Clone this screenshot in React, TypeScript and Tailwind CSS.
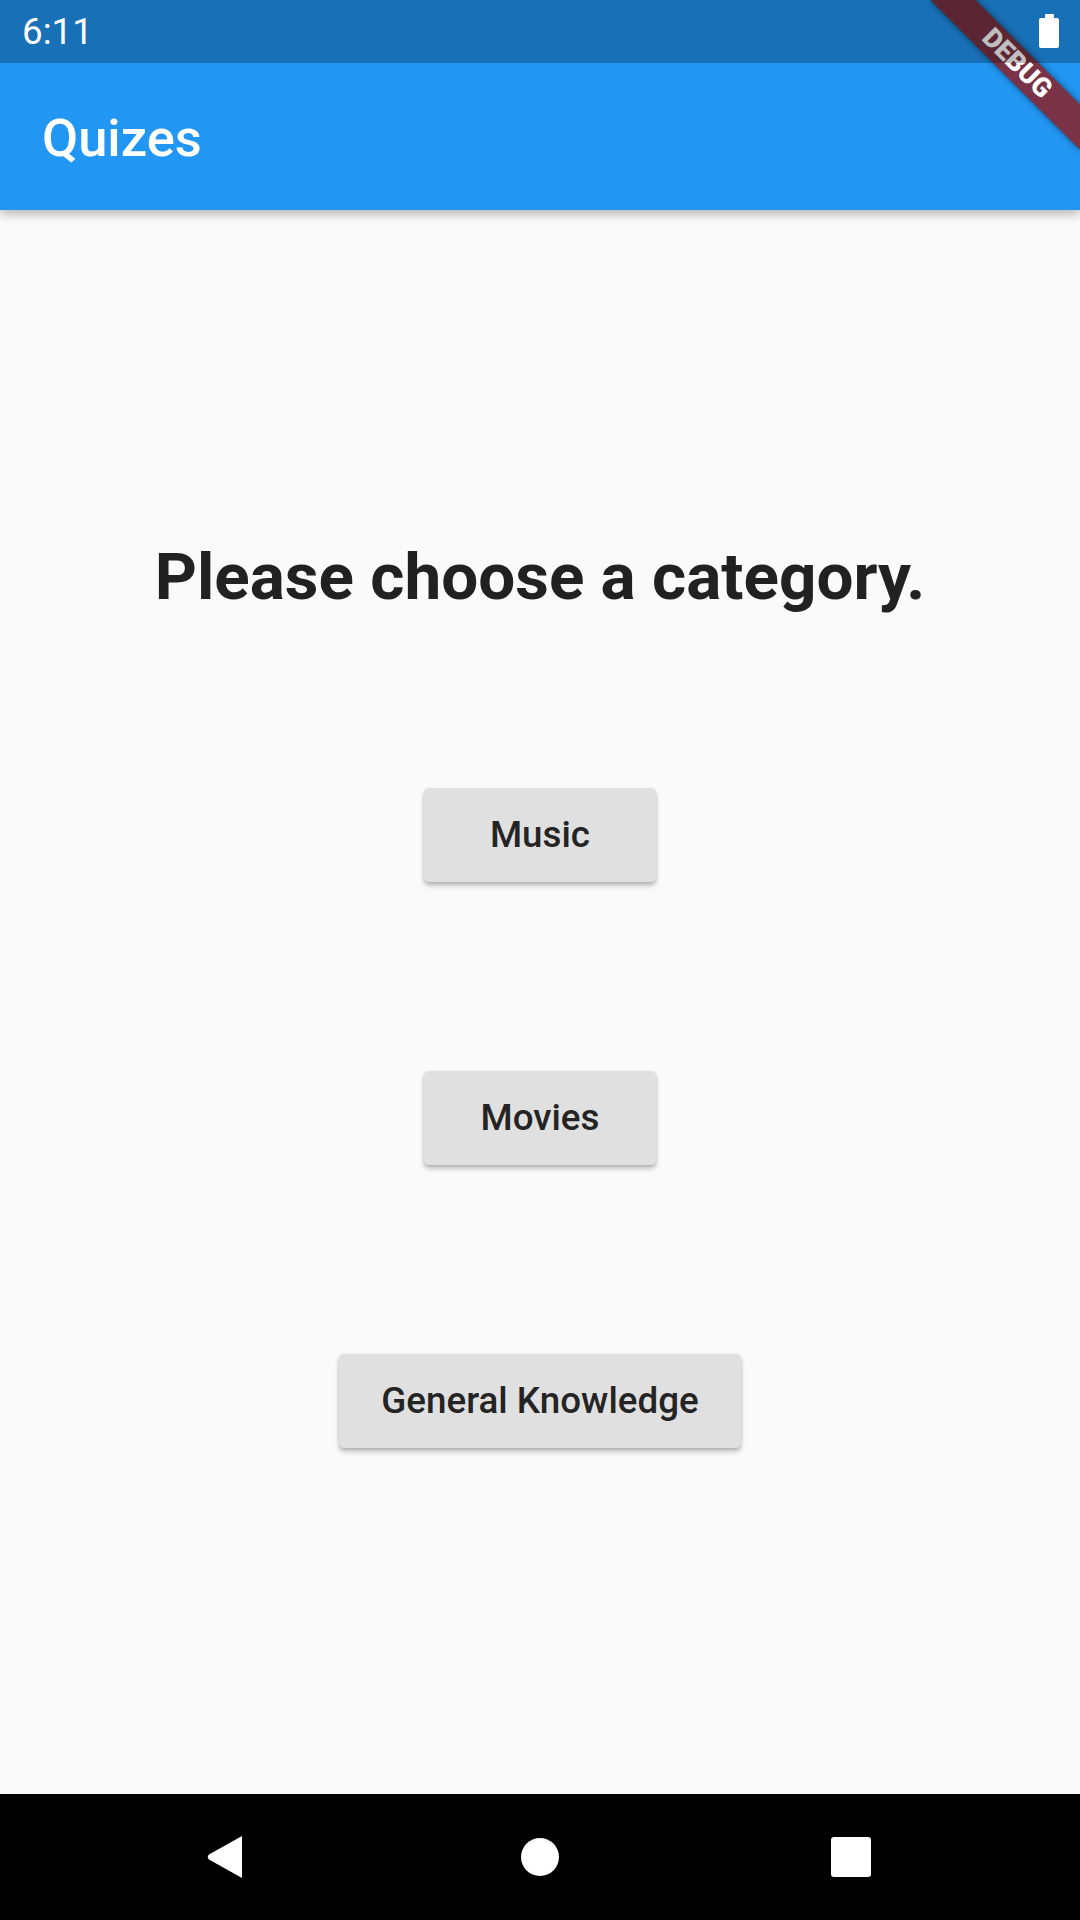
const categories = ["Music", "Movies", "General Knowledge"];

function Battery() {
  return (
    <svg width="20" height="34" viewBox="0 0 20 34" className="block">
      <rect x="6" y="0" width="9" height="5" rx="1" fill="#ffffff" />
      <rect x="0" y="4" width="20" height="30" rx="2" fill="#ffffff" />
    </svg>
  );
}

function NavBar() {
  return (
    <nav className="h-[126px] bg-black flex items-center justify-center shrink-0">
      <div className="w-[315px] flex justify-center">
        <svg width="38" height="44" viewBox="0 0 38 44">
          <path d="M36 1 L36 43 L3 24.5 Q0.5 22 3 19.5 Z" fill="#ffffff" />
        </svg>
      </div>
      <div className="w-[315px] flex justify-center">
        <div className="w-[38px] h-[38px] rounded-full bg-white" />
      </div>
      <div className="w-[315px] flex justify-center">
        <div className="w-[40px] h-[40px] rounded-[3px] bg-white mr-[8px]" />
      </div>
    </nav>
  );
}

export default function App() {
  return (
    <div className="relative w-[1080px] h-[1920px] overflow-hidden bg-[#fafafa] flex flex-col font-['Roboto','Noto_Sans',sans-serif]">

      {/* App bar (sits under the status bar) */}
      <header className="relative z-10 h-[210px] shrink-0 bg-[#2196f3] flex flex-col shadow-[0_4px_10px_rgba(0,0,0,0.28)]">
        <div className="h-[63px]" />
        <div className="flex-1 flex items-center pl-[42px] pt-[3px]">
          <h1 className="text-white text-[52.5px] font-medium leading-none">Quizes</h1>
        </div>
      </header>

      {/* Body */}
      <main className="flex-1 flex flex-col items-center">
        <h2 className="mt-[328px] text-[65.6px] leading-[77px] font-bold text-[#212121]">
          Please choose a category.
        </h2>
        <div className="mt-[173px] flex flex-col items-center gap-[189px]">
          {categories.map((c) => (
            <button
              key={c}
              className="h-[94px] min-w-[232px] px-[42px] rounded-[5px] bg-[#e0e0e0] text-[36.75px] font-medium leading-none text-[#242424] shadow-[0_4px_5px_rgba(0,0,0,0.22),0_1px_3px_rgba(0,0,0,0.12)]"
            >
              {c}
            </button>
          ))}
        </div>
      </main>

      <NavBar />

      {/* DEBUG banner: translucent red band over its own dark shadow */}
      <div className="absolute z-20 left-[975px] top-[73.5px] w-[210px] h-[31.5px] origin-[105px_-73.5px] rotate-45 bg-[rgba(0,0,0,0.42)] bg-[linear-gradient(rgba(183,28,28,0.627),rgba(183,28,28,0.627))] shadow-[0_0_6px_rgba(0,0,0,0.5)] flex items-center justify-center">
        <span className="text-white text-[26.8px] font-black leading-none">DEBUG</span>
      </div>

      {/* Status bar scrim + icons */}
      <div className="absolute z-30 inset-x-0 top-0 h-[63px] bg-black/25 flex items-start justify-between pl-[22px] pr-[21px]">
        <span className="mt-[14px] text-white text-[36.75px] leading-none">6:11</span>
        <div className="mt-[14px]">
          <Battery />
        </div>
      </div>

    </div>
  );
}
